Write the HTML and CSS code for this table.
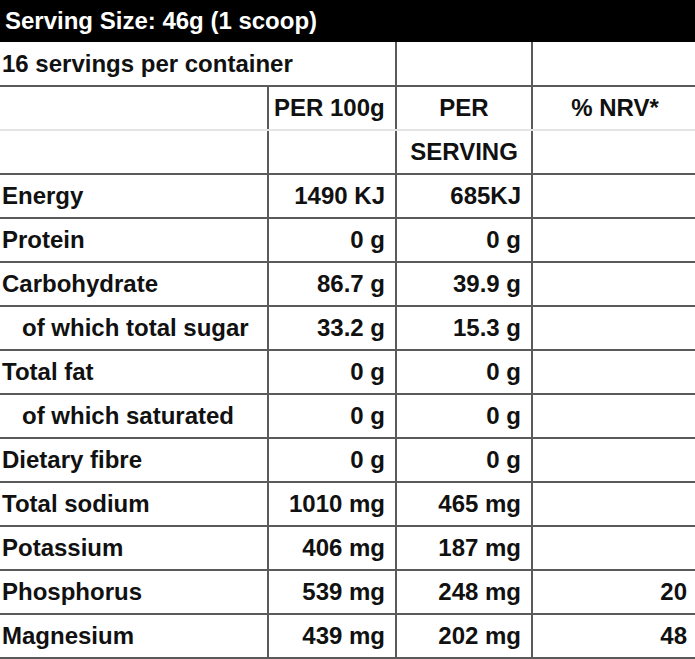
FILE: index.html
```html
<!DOCTYPE html>
<html>
<head>
<meta charset="utf-8">
<link rel="stylesheet" href="styles.css">
</head>
<body>
<div class="label">
  <div class="title">Serving Size: 46g (1 scoop)</div>
  <table class="facts">
    <colgroup>
      <col class="c1"><col class="c2"><col class="c3"><col class="c4">
    </colgroup>
    <tr class="row top">
      <td colspan="2" class="name">16 servings per container</td>
      <td></td>
      <td></td>
    </tr>
    <tr class="head head-a">
      <td></td>
      <td class="left">PER 100g</td>
      <td class="center">PER</td>
      <td class="center">% NRV*</td>
    </tr>
    <tr class="head head-b">
      <td></td>
      <td></td>
      <td class="center">SERVING</td>
      <td></td>
    </tr>
    <tr class="row"><td class="name">Energy</td><td class="num">1490 KJ</td><td class="num">685KJ</td><td></td></tr>
    <tr class="row"><td class="name">Protein</td><td class="num">0 g</td><td class="num">0 g</td><td></td></tr>
    <tr class="row"><td class="name">Carbohydrate</td><td class="num">86.7 g</td><td class="num">39.9 g</td><td></td></tr>
    <tr class="row"><td class="name sub">of which total sugar</td><td class="num">33.2 g</td><td class="num">15.3 g</td><td></td></tr>
    <tr class="row"><td class="name">Total fat</td><td class="num">0 g</td><td class="num">0 g</td><td></td></tr>
    <tr class="row"><td class="name sub">of which saturated</td><td class="num">0 g</td><td class="num">0 g</td><td></td></tr>
    <tr class="row"><td class="name">Dietary fibre</td><td class="num">0 g</td><td class="num">0 g</td><td></td></tr>
    <tr class="row"><td class="name">Total sodium</td><td class="num">1010 mg</td><td class="num">465 mg</td><td></td></tr>
    <tr class="row"><td class="name">Potassium</td><td class="num">406 mg</td><td class="num">187 mg</td><td></td></tr>
    <tr class="row"><td class="name">Phosphorus</td><td class="num">539 mg</td><td class="num">248 mg</td><td class="num">20</td></tr>
    <tr class="row"><td class="name">Magnesium</td><td class="num">439 mg</td><td class="num">202 mg</td><td class="num">48</td></tr>
  </table>
</div>
</body>
</html>
```

FILE: styles.css
```css
html, body {
  margin: 0;
  padding: 0;
  background: #fff;
  overflow: hidden;
}

.label {
  width: 698px;
  font-family: "Liberation Sans", Arial, sans-serif;
  font-weight: bold;
  font-size: 24px;
  color: #111;
}

.title {
  height: 42px;
  line-height: 42px;
  background: #000;
  color: #fff;
  padding-left: 5px;
  white-space: nowrap;
}

.facts {
  width: 698px;
  border-collapse: collapse;
  table-layout: fixed;
}

.c1 { width: 268px; }
.c2 { width: 128px; }
.c3 { width: 136px; }
.c4 { width: 166px; }

.facts td {
  border: 2px solid #5a5a5a;
  padding: 0 10px 0 2px;
  white-space: nowrap;
  vertical-align: middle;
  line-height: 26px;
}

.facts td:first-child {
  border-left: none;
}

.facts tr:first-child td {
  border-top: none;
}

.row td {
  height: 42px;
}

.row.top td {
  height: 43px;
}

.head td {
  height: 42px;
}

.head-a td {
  border-bottom: 2px solid #e4e4e4;
}

.head-b td {
  border-top: 2px solid #e4e4e4;
}

.head-a td:first-child,
.head-b td:first-child {
  border-right: 2px solid #5a5a5a;
}

.name.sub {
  padding-left: 22px;
}

.num {
  text-align: right;
}

.left {
  text-align: left;
  padding-left: 5px !important;
}

.center {
  text-align: center;
  padding: 0 !important;
}
```
